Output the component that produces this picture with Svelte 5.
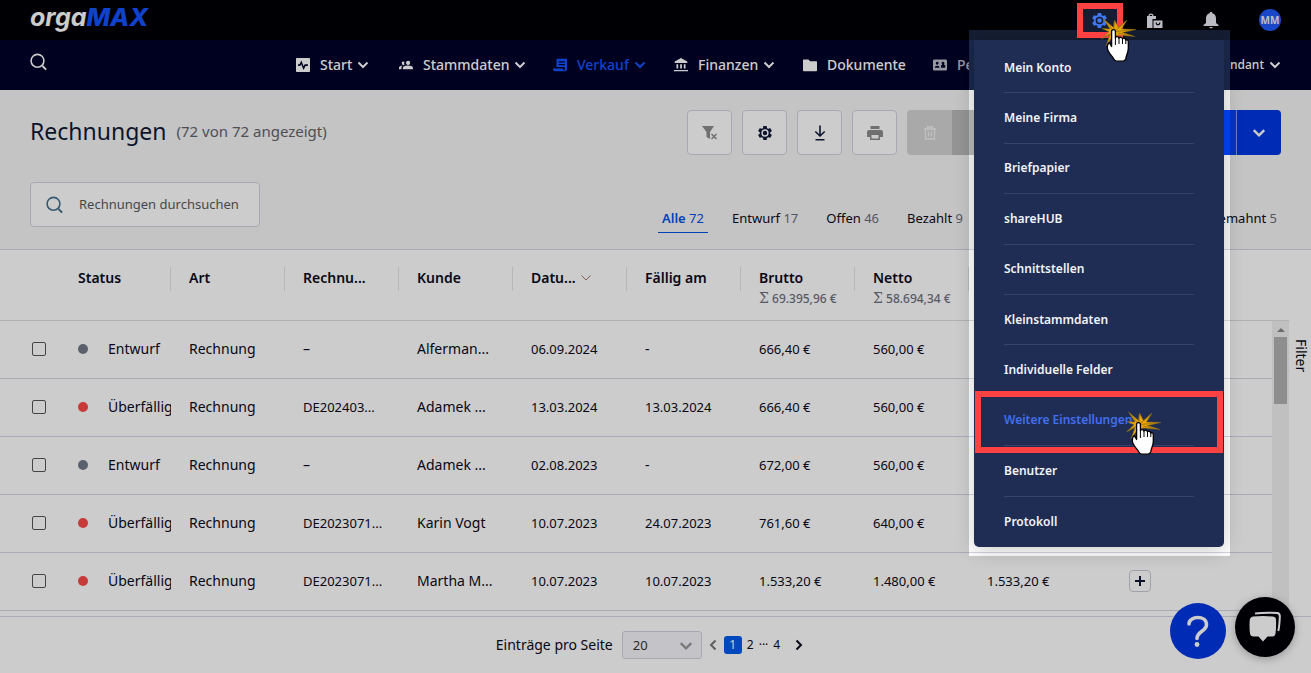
<script>
  const nav = [
    { label: 'Start', icon: 'pulse', arrow: true },
    { label: 'Stammdaten', icon: 'people', arrow: true },
    { label: 'Verkauf', icon: 'receipt', arrow: true, active: true },
    { label: 'Finanzen', icon: 'bank', arrow: true },
    { label: 'Dokumente', icon: 'folder' },
    { label: 'Pe', icon: 'badge', faded: true }
  ];
  const icons = {
    pulse: 'M1 0h18a1 1 0 0 1 1 1v18a1 1 0 0 1-1 1H1a1 1 0 0 1-1-1V1a1 1 0 0 1 1-1zM3 9v2.400h3l1.500-2.400 3.200 8 3-5.600H17V9h-4.600l-1.500 2.700-3.200-8L5 9z',
    people: 'M6.500 5a2.500 2.500 0 0 1 1.400.400 4 4 0 0 0 0 4.200 2.500 2.500 0 1 1-1.400-4.600zM0 16v-2c0-2 2.500-3 5-3.200C4 11.800 3.500 13 3.500 14v2zM13 4a3 3 0 1 1 0 6 3 3 0 0 1 0-6zM5.500 16v-1.800c0-2.200 4-3.400 7.300-3.400s7.200 1.200 7.200 3.400V16z',
    receipt: 'M5 1h15v15a3 3 0 0 1-3 3H3a3 3 0 0 1-3-3v-1h14v1c0 2 3 2 3 0v-3H5zM8 4.500v2h9v-2zm0 4v2h9v-2z',
    bank: 'M10 0l9 5v2H1V5zM3.500 9h2.500v6H3.500zm5.300 0h2.500v6H8.800zM14 9h2.500v6H14zM0 17h20v2H0z',
    folder: 'M1 2h7l2 2.500h9a1 1 0 0 1 1 1V18a1 1 0 0 1-1 1H1a1 1 0 0 1-1-1V3a1 1 0 0 1 1-1z',
    badge: 'M2 2h16a2 2 0 0 1 2 2v12a2 2 0 0 1-2 2H2a2 2 0 0 1-2-2V4a2 2 0 0 1 2-2zM6 5.500a2 2 0 1 0 0 4 2 2 0 0 0 0-4zM2.500 14h7c0-2-1.600-3-3.500-3s-3.500 1-3.500 3zM14 5.500a2 2 0 0 0-1 3.500v1h-1.500v4h6v-4H16V8.500a2 2 0 0 0-2-3z'
  };
  const menu = ['Mein Konto', 'Meine Firma', 'Briefpapier', 'shareHUB', 'Schnittstellen', 'Kleinstammdaten', 'Individuelle Felder', 'Weitere Einstellungen', 'Benutzer', 'Protokoll'];
  const marked = 'Weitere Einstellungen';
  const tabs = [
    { label: 'Alle', count: 72, active: true },
    { label: 'Entwurf', count: 17 },
    { label: 'Offen', count: 46 },
    { label: 'Bezahlt', count: 9 },
    { label: 'Gemahnt', count: 5 }
  ];
  const columns = [
    { label: 'Status' },
    { label: 'Art' },
    { label: 'Rechnu...' },
    { label: 'Kunde' },
    { label: 'Datu...', sorted: true },
    { label: 'Fällig am' },
    { label: 'Brutto', sum: '69.395,96 €' },
    { label: 'Netto', sum: '58.694,34 €' },
    { label: '' }
  ];
  const rows = [
    ['Entwurf', 'Rechnung', '–', 'Alferman...', '06.09.2024', '-', '666,40 €', '560,00 €', ''],
    ['Überfällig', 'Rechnung', 'DE202403...', 'Adamek ...', '13.03.2024', '13.03.2024', '666,40 €', '560,00 €', ''],
    ['Entwurf', 'Rechnung', '–', 'Adamek ...', '02.08.2023', '-', '672,00 €', '560,00 €', ''],
    ['Überfällig', 'Rechnung', 'DE2023071...', 'Karin Vogt', '10.07.2023', '24.07.2023', '761,60 €', '640,00 €', ''],
    ['Überfällig', 'Rechnung', 'DE2023071...', 'Martha M...', '10.07.2023', '10.07.2023', '1.533,20 €', '1.480,00 €', '1.533,20 €']
  ];
</script>

{#snippet chevron(size, dir, width)}
  <svg class="chev {dir}" width={size} height={size} viewBox="0 0 12 12" aria-hidden="true">
    <path d="M1.500 3.500 6 8l4.500-4.500" fill="none" stroke="currentColor" stroke-width={width} />
  </svg>
{/snippet}

{#snippet gear(size)}
  <svg width={size} height={size} viewBox="1 1 22 22" aria-hidden="true">
    <path fill="currentColor" fill-rule="evenodd" d="M19.140 12.940c.04-.3.060-.610.060-.940 0-.320-.020-.640-.070-.940l2.030-1.580a.49.49 0 0 0 .12-.61l-1.920-3.320a.49.49 0 0 0-.590-.220l-2.390.960c-.5-.380-1.030-.7-1.620-.940l-.360-2.540a.48.48 0 0 0-.480-.410h-3.840c-.240 0-.430.170-.470.410l-.360 2.540c-.590.240-1.130.570-1.620.940l-2.390-.960c-.220-.080-.470 0-.590.220L2.740 8.870c-.120.210-.080.470.120.610l2.030 1.580c-.050.3-.090.630-.090.940s.020.640.070.940l-2.030 1.580a.49.49 0 0 0-.12.61l1.920 3.320c.120.220.370.290.590.220l2.390-.960c.5.380 1.030.7 1.620.940l.360 2.540c.050.240.240.410.480.410h3.840c.240 0 .440-.170.470-.410l.360-2.540c.590-.240 1.130-.560 1.620-.940l2.390.960c.220.080.470 0 .590-.220l1.920-3.320c.120-.220.070-.470-.120-.610zM12 7a5 5 0 1 0 0 10 5 5 0 0 0 0-10zM12 9a3 3 0 1 1 0 6 3 3 0 0 1 0-6z" />
  </svg>
{/snippet}

{#snippet lens()}
  <svg width="18" height="18" viewBox="0 0 18 18" aria-hidden="true">
    <circle cx="7.500" cy="7.800" r="6.400" fill="none" stroke="currentColor" stroke-width="1.600" />
    <path d="M12.500 13l3.600 3.600" stroke="currentColor" stroke-width="2" />
  </svg>
{/snippet}

{#snippet pointer()}
  <svg width="36" height="46" viewBox="0 0 36 46" aria-hidden="true">
    <path fill="#e8a400" stroke="#7d6420" stroke-width=".5" d="M12.500 10.500 2.500 2l6.500 10-8-.500 7 3.300L.500 22l8.500-4.500L5 29l7-10 6-1 16 1.500-12.500-4L35 12.500l-14.500-.500L26 3l-8.500 7.500L13.500 3z" />
    <path fill="none" stroke="#806010" stroke-width=".6" d="M12.500 14 5 5M13 13V5M14 14l9-8M15 14.500l15-1.500M13 15 3 20M17 16l12 2.500" />
    <path fill="#fff" stroke="#000" stroke-width="1.300" stroke-linejoin="round" d="M10.600 14.500c0-2.500 3.800-2.500 3.800 0v6.300c.4-1.500 3.200-1.500 3.600.3.600-1.300 3.200-1.100 3.500.7.800-1 3.200-.7 3.300 1.300.9-.7 2.500-.2 2.500 1.600v6.500c0 4-1.800 6.500-2.500 10.500q-1 2.500-3 2.500h-6q-2 0-3.500-3C10.500 38.500 6.800 35 6.300 31c-.2-3 .5-4.500 2-5.500l2.300 4z" />
    <path fill="none" stroke="#000" d="M14.400 20.500V28M18 21v6M21.500 22v5M24.800 23v4" />
  </svg>
{/snippet}

<div class="page">
  <header class="top">
    <a class="logo" href="#start">orga<b>MAX</b></a>
    <div class="tools">
      <button aria-label="Shop">
        <svg width="18" height="18" viewBox="0 0 18 18"><path fill="currentColor" fill-rule="evenodd" d="M2 5h1.500a2.500 2.500 0 0 1 5 0H11v3H7.500v9H2zM4.700 5h2.600a1.300 1.300 0 0 0-2.600 0zM8.500 9.500h9V17h-9zM10.600 11.500c0 3.800 4.800 3.800 4.800 0h-1.200c0 2-2.400 2-2.400 0z" /></svg>
      </button>
      <button aria-label="Benachrichtigungen">
        <svg width="18" height="18" viewBox="0 0 18 18"><path fill="currentColor" d="M9 1c.9 0 1.300.5 1.400 1.300C13 3 14 5 14 7.500V12l2.500 2v1h-15v-1L4 12V7.500C4 5 5 3 7.600 2.300 7.700 1.500 8.100 1 9 1zM7.200 16h3.600c-.3 1.800-3.300 1.800-3.600 0z" /></svg>
      </button>
      <button class="avatar">MM</button>
    </div>
  </header>

  <nav class="bar">
    <button class="find" aria-label="Suche">{@render lens()}</button>
    <ul>
      {#each nav as item}
        <li>
          <a href="#{item.icon}" class:active={item.active} class:faded={item.faded}>
            <svg width="14" height="14" viewBox="0 0 20 20" aria-hidden="true"><path fill="currentColor" fill-rule="evenodd" d={icons[item.icon]} /></svg>
            <span>{item.label}</span>
            {#if item.arrow}{@render chevron(12, 'down', 2)}{/if}
          </a>
        </li>
      {/each}
    </ul>
    <button class="client">Mandant {@render chevron(12, 'down', 2)}</button>
  </nav>

  <section class="head">
    <div class="title">
      <h1>Rechnungen</h1>
      <span>(72 von 72 angezeigt)</span>
      <div class="actions">
        <button class="box off" aria-label="Filter zurücksetzen">
          <svg width="18" height="18" viewBox="0 0 18 18"><path fill="currentColor" d="M1 2h12L9 8v7L5.500 13V8z" /><path d="M10.500 10l5 5M15.500 10l-5 5" stroke="currentColor" stroke-width="1.500" /></svg>
        </button>
        <button class="box" aria-label="Ansicht">{@render gear(16)}</button>
        <button class="box" aria-label="Export">
          <svg width="18" height="18" viewBox="0 0 18 18"><path d="M9 1.500v10M4.300 7.500 9 12l4.700-4.500M4.500 15.800h9" fill="none" stroke="currentColor" stroke-width="1.600" /></svg>
        </button>
        <button class="box off" aria-label="Drucken">
          <svg width="18" height="18" viewBox="0 0 18 18"><path fill="currentColor" fill-rule="evenodd" d="M4.500 2h9v3h-9zM3 6h12c1 0 2 .8 2 2v5h-3v3H4v-3H1V8c0-1.200 1-2 2-2zM5.500 11v3.500h7V11z" /></svg>
        </button>
        <div class="pair off-pair">
          <button aria-label="Löschen">
            <svg width="16" height="16" viewBox="0 0 16 16"><path d="M2 4h12M5.500 4V2h5v2M3.500 4v10h9V4M6.500 6.500v5M9.500 6.500v5" fill="none" stroke="currentColor" stroke-width="1.300" /></svg>
          </button>
          <button class="rest" aria-label="Weitere Aktionen"></button>
        </div>
        <div class="pair new">
          <button class="main" aria-label="Neue Rechnung"></button>
          <button class="more" aria-label="Mehr">{@render chevron(14, 'down', 2)}</button>
        </div>
      </div>
    </div>
    <div class="filters">
      <label class="search">
        {@render lens()}
        <input type="text" placeholder="Rechnungen durchsuchen" aria-label="Rechnungen durchsuchen" />
      </label>
      <div class="tabs">
        {#each tabs as tab}
          <button class:active={tab.active}><span>{tab.label}</span> <em>{tab.count}</em></button>
        {/each}
      </div>
    </div>
  </section>

  <section class="list">
    <div class="grid">
      <table>
        <thead>
          <tr>
            <th class="pick"></th>
            {#each columns as col, i}
              <th class:first={i === 0}>
                <div class="cap">
                  <span>{col.label}</span>
                  {#if col.sorted}{@render chevron(12, 'down', 1)}{/if}
                </div>
                {#if col.sum}<small><i>Σ</i> {col.sum}</small>{/if}
              </th>
            {/each}
            <th class="last"></th>
          </tr>
        </thead>
        <tbody>
          {#each rows as row, r}
            <tr>
              <td class="pick"><input type="checkbox" aria-label="Zeile {r + 1} wählen" /></td>
              {#each row as cell, i}
                <td class:num={/\d/.test(cell)}>
                  {#if i === 0}
                    <div class="status"><span class="dot" class:late={cell !== 'Entwurf'}></span><span>{cell}</span></div>
                  {:else}{cell}{/if}
                </td>
              {/each}
              <td class="last">
                <button class="plus" aria-label="Mehr"><svg width="12" height="12" viewBox="0 0 12 12"><path d="M6 1v10M1 6h10" stroke="currentColor" stroke-width="2" /></svg></button>
              </td>
            </tr>
          {/each}
        </tbody>
      </table>
      <div class="scroll"><i></i><b></b></div>
    </div>
    <button class="side">Filter</button>
  </section>

  <footer>
    <label for="size">Einträge pro Seite</label>
    <div class="select">
      <select id="size"><option>20</option></select>
      {@render chevron(14, 'down', 2)}
    </div>
    <div class="pages">
      <button class="dim" aria-label="Zurück">{@render chevron(12, 'left', 2)}</button>
      <button class="on">1</button>
      <button>2</button>
      <span>···</span>
      <button>4</button>
      <button class="next" aria-label="Weiter">{@render chevron(12, 'right', 2)}</button>
    </div>
  </footer>

  <button class="fab help" aria-label="Hilfe">
    <svg width="56" height="56" viewBox="0 0 56 56"><path d="M19 21c0-8.500 17.500-9 17.500.5 0 7-9.500 6.500-9.500 14" fill="none" stroke="#fff" stroke-width="3.600" stroke-linecap="round" /><circle cx="27" cy="41.500" r="2.400" fill="#fff" /></svg>
  </button>
  <button class="fab chat" aria-label="Chat">
    <svg width="60" height="60" viewBox="0 0 60 60"><path d="M20 16.500c8-1 15-1 22.500-.500 2 .5 2.500 2 2.300 4-.2 5-.4 9-1.500 14" fill="none" stroke="#fff" stroke-width="2" /><path fill="#fff" d="M18 19.500q10-1 20 0 3 .5 3 3 .4 7-.5 14-.5 3-3 3h-5l-4.500 5-4.500-5h-5q-3 0-3.500-3-.8-6-.3-13 .3-3.500 3.300-4z" /></svg>
  </button>

  <div class="spot"></div>

  <div class="menu">
    {#each menu as entry}
      <a href="#menu" class:marked={entry === marked}><span>{entry}</span></a>
    {/each}
    <div class="frame"></div>
    <div class="hand low">{@render pointer()}</div>
  </div>
  <button class="focus" aria-label="Einstellungen">{@render gear(17)}</button>
  <div class="hand high">{@render pointer()}</div>
</div>

<style>
  :global(body) { margin: 0; }
  * { box-sizing: border-box; }
  button { font: inherit; color: inherit; border: 0; background: none; padding: 0; cursor: pointer; }
  a { color: inherit; text-decoration: none; }
  svg { display: block; flex: none; }
  .page {
    position: relative; overflow: hidden; min-height: 100vh; display: flex; flex-direction: column;
    font: 14px/20px "Noto Sans", "Open Sans", sans-serif; color: #0a0a20; background: #fff;
  }
  .left { transform: rotate(90deg); }
  .right { transform: rotate(-90deg); }

  .top { height: 40px; background: #000005; color: #fff; display: flex; align-items: center; justify-content: space-between; padding: 0 30px; }
  .logo { font: italic 700 25px/32px Inter, sans-serif; padding-bottom: 6px; }
  .logo b { color: #1453ff; font-weight: 800; }
  .tools { display: flex; align-items: center; gap: 39px; }
  .tools button { color: #ececf6; }
  .tools .avatar { width: 22px; height: 22px; border-radius: 50%; background: #2059f9; font-size: 10px; line-height: 22px; font-weight: 700; }

  .bar { height: 50px; background: #000028; color: #fff; display: flex; align-items: center; padding: 0 30px; font-weight: 500; }
  .find { margin-bottom: 6px; }
  .bar ul { list-style: none; margin: 0 0 0 248px; padding: 0; display: grid; grid-template-columns: 103px 154px 121px 129px 130px 42px; }
  .bar a { display: flex; align-items: center; }
  .bar a span { margin: 0 5px 0 10px; }
  .bar a.active { color: #1356ff; }
  .bar a.faded { opacity: .75; }
  .client { margin-left: auto; display: flex; align-items: center; gap: 5px; font-size: 12px; }

  .head { height: 160px; background: #f6f6f6; border-bottom: 1px solid #d5d5e2; padding: 20px 30px 0; }
  .title { display: flex; align-items: center; height: 45px; }
  h1 { margin: 0 0 4px; font-size: 23px; line-height: 32px; font-weight: 400; color: #0f1a38; }
  .title > span { margin: 0 0 4px 10px; font-size: 15px; color: #60646e; }
  .actions { margin-left: auto; display: flex; gap: 10px; }
  .box { width: 45px; height: 45px; border: 1px solid #d0d3e2; border-radius: 4px; background: #fff; display: grid; place-items: center; color: #0f1a38; }
  .box.off { color: #8d8d8d; }
  .pair { display: flex; height: 45px; border-radius: 4px; overflow: hidden; }
  .pair button { width: 45px; display: grid; place-items: center; }
  .off-pair { background: #d4d4d4; color: #f0f0f0; }
  .pair .rest { width: 130px; background: #b9b9b9; }
  .new { background: #0036e2; color: #fff; }
  .pair .main { width: 145px; background: #0042f5; border-right: 1px solid #86a3f0; }
  .pair .more { width: 44px; }

  .filters { display: flex; justify-content: space-between; margin-top: 27px; }
  .search { width: 230px; height: 45px; border: 1px solid #d0d3e2; border-radius: 4px; background: #fff; display: flex; align-items: center; padding-left: 15px; color: #45708c; }
  .search input { border: 0; outline: 0; background: none; font: inherit; font-size: 13px; min-width: 0; flex: 1; padding: 0 0 2px 15px; }
  .search input::placeholder { color: #5a5a5a; opacity: 1; }
  .tabs { display: flex; gap: 20px; margin-top: 22px; width: 623px; font-size: 13px; }
  .tabs button { height: 29px; padding: 0 4px; border-bottom: 1px solid transparent; white-space: nowrap; }
  .tabs button:last-child { margin-left: auto; }
  .tabs em { font-style: normal; color: #686d7a; }
  .tabs .active, .tabs .active em { color: #0050e8; border-color: #0050e8; }
  .tabs .active span { font-weight: 600; }

  .list { display: flex; }
  .grid { flex: 1; position: relative; }
  table { width: 100%; table-layout: fixed; border-collapse: separate; border-spacing: 0; }
  th { height: 71px; padding: 18px 0 0 18px; width: 114px; text-align: left; vertical-align: top; font-weight: 600; border-bottom: 1px solid #dcdcdc; position: relative; }
  th.first { width: 111px; }
  th.pick { width: 60px; }
  th.last { width: auto; }
  th:not(.pick):not(:last-child)::after { content: ""; position: absolute; right: 0; top: 17px; height: 24px; width: 1px; background: #e4e4e8; }
  .cap { display: flex; align-items: center; gap: 4px; }
  .cap svg { color: #a07a6a; }
  small { display: block; font-size: 12px; line-height: 22px; font-weight: 500; color: #6d7180; white-space: nowrap; }
  small i { font: 14px "DejaVu Serif", serif; }
  td { height: 58px; padding: 0 0 2px 18px; border-bottom: 1px solid #d3d5e2; white-space: nowrap; overflow: hidden; }
  td.num { font-size: 13px; }
  td.pick { padding-left: 32px; }
  td.last { padding-left: 46px; }
  .pick input { appearance: none; display: block; width: 14px; height: 14px; margin: 0; border: 1px solid #555; border-radius: 2px; }
  .status { display: flex; align-items: center; gap: 20px; overflow: hidden; }
  .dot { width: 10px; height: 10px; border-radius: 50%; background: #717a87; flex: none; }
  .dot.late { background: #f94949; }
  .plus { width: 22px; height: 22px; border: 1px solid #c6cad6; border-radius: 4px; display: grid; place-items: center; color: #0f1a38; }
  .scroll { position: absolute; right: 0; top: 71px; bottom: 0; width: 17px; background: #f0f0f0; display: flex; flex-direction: column; align-items: center; gap: 5px; padding-top: 7px; }
  .scroll i { border: 4px solid transparent; border-top: 0; border-bottom-color: #888; }
  .scroll b { width: 13px; height: 67px; background: #b2b2b2; }
  .side { width: 22px; writing-mode: vertical-rl; text-align: left; padding: 89px 0 0 2px; }

  footer { margin-top: 5px; border-top: 1px solid #d3d5e2; flex: 1; display: flex; align-items: flex-start; padding: 14px 40px 0 30px; justify-content: center; line-height: 28px; }
  footer label { width: 126px; white-space: nowrap; }
  .select { position: relative; margin-right: 5px; }
  select { appearance: none; width: 80px; height: 28px; border: 1px solid #d0d3e2; border-radius: 3px; background: #f5f5fa; font: 13px "Noto Sans", sans-serif; color: #333; padding: 0 10px; }
  .select :global(svg) { position: absolute; right: 9px; top: 8px; color: #999; pointer-events: none; }
  .pages { display: flex; align-items: center; gap: 5px; font-size: 12px; height: 28px; }
  .pages .dim { color: #777; }
  .pages .on { width: 18px; height: 18px; border-radius: 3px; background: #005aee; color: #fff; line-height: 18px; }
  .pages .next { margin-left: 8px; }

  .fab { position: absolute; border-radius: 50%; }
  .help { right: 85px; bottom: 14px; background: #0036e2; }
  .chat { right: 16px; bottom: 16px; background: #000006; box-shadow: 0 2px 8px #0004; }

  .spot { position: absolute; right: 81px; top: 30px; width: 261px; height: 526px; box-shadow: 0 0 0 2000px #0003; pointer-events: none; background: linear-gradient(#141d32 10px, #1b284b 10px, #1b284b 60px, #0000 60px); }
  .menu { position: absolute; right: 87px; top: 40px; width: 250px; height: 507px; padding: 3px 30px 0; background: #1f2d54; color: #f2f3f7; border-radius: 0 0 5px 5px; box-shadow: 0 4px 20px #0003; display: grid; grid-template-rows: repeat(10, 1fr); font-size: 12px; font-weight: 600; }
  .menu a { display: flex; align-items: center; border-bottom: 1px solid #36446a; }
  .menu a:nth-of-type(10) { border-bottom: 0; }
  .menu a.marked { color: #416ff0; }
  .frame { position: absolute; left: 1px; right: 1px; top: 351px; height: 62px; border: 6px solid #ff4142; }
  .hand { position: absolute; pointer-events: none; }
  .hand.low { left: 152px; top: 370px; }
  .hand.high { right: 174px; top: 17px; }
  .focus { position: absolute; right: 188px; top: 3px; width: 46px; height: 35px; border: 6px solid #ff4142; background: #141d32; color: #4178f6; display: grid; place-items: center; padding: 0 2px 1px 0; }
</style>
